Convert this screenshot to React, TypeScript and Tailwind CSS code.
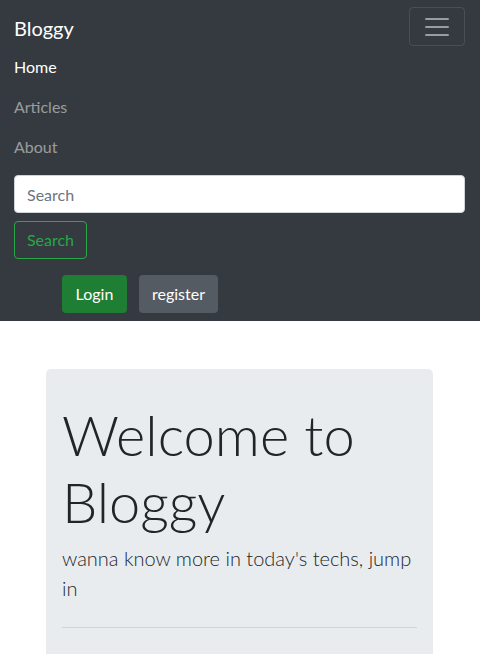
const font = { fontFamily: 'Lato, "Open Sans", sans-serif' };

const links = [
  { label: "Home", active: true },
  { label: "Articles", active: false },
  { label: "About", active: false },
];

export default function App() {
  return (
    <div className="min-h-[654px] bg-white text-[#212529]" style={font}>
      <nav className="bg-[#343a40] pl-[14px] pr-[15px] pt-[7px] pb-2">
        <div className="flex items-center justify-between">
          <a className="text-[20px] leading-[30px] text-white pt-[2px]">Bloggy</a>
          <button className="w-[56px] h-[39px] flex items-center justify-center rounded border border-white/10">
            <svg width="30" height="30" viewBox="0 0 30 30">
              <path d="M4 7h22M4 15h22M4 23h22" stroke="rgba(255,255,255,0.5)" strokeWidth="2" strokeLinecap="round" />
            </svg>
          </button>
        </div>
        <ul className="flex flex-col mt-px">
          {links.map((l) => (
            <li key={l.label} className={`py-2 text-[16px] leading-[24px] ${l.active ? "text-white" : "text-white/50"}`}>
              {l.label}
            </li>
          ))}
        </ul>
        <div className="flex flex-col items-start my-2">
          <input
            className="w-full h-[38px] rounded bg-white border border-[#ced4da] px-3 text-[16px] placeholder:text-[#6c757d] outline-none"
            placeholder="Search"
            style={font}
          />
          <button className="mt-2 h-[38px] w-[73px] rounded border border-[#28a745] text-[#28a745] text-[16px]">
            Search
          </button>
        </div>
        <div className="flex items-center pl-12 gap-3 mt-4">
          <button className="h-[38px] w-[65px] rounded bg-[#1e7e34] text-white text-[16px]">Login</button>
          <button className="h-[38px] w-[79px] rounded bg-[#545b62] text-white text-[16px]">register</button>
        </div>
      </nav>
      <div className="mt-12 mx-[46px] w-[387px] rounded-[5px] bg-[#e9ecef] px-4 pt-8 pb-8">
        <h1 className="text-[56px] leading-[67px] font-light mb-2">Welcome to Bloggy</h1>
        <p className="text-[20px] leading-[30px] font-light text-[#212529]">wanna know more in today's techs, jump in</p>
        <hr className="my-6 border-t border-black/10" />
        <div className="h-[60px]" />
      </div>
    </div>
  );
}
